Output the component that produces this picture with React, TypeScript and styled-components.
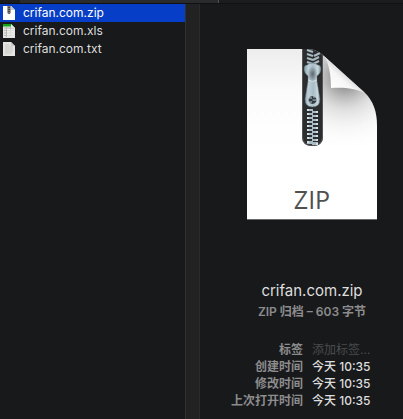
import React, { useState } from "react";
import styled, { createGlobalStyle } from "styled-components";

const GlobalStyle = createGlobalStyle`
  *, *::before, *::after { box-sizing: border-box; }
  body {
    margin: 0;
    background: #18191b;
    color: #dedede;
    font-family: Inter, "Noto Sans CJK SC", sans-serif;
    font-size: 12px;
    -webkit-font-smoothing: antialiased;
  }
`;

const Window = styled.div`
  display: flex;
  flex-direction: column;
  min-height: 100vh;
`;

const TabStrip = styled.div`
  display: grid;
  grid-template-columns: 20px 199px 1fr;
  height: 4px;
  border-bottom: 1px solid #101112;
`;

const TabEdge = styled.div<{ $active?: boolean }>`
  background: ${(p) => (p.$active ? "#2a2b2c" : "#1b1c1d")};
  border-right: ${(p) => (p.$active ? "1px solid #505152" : "0")};
`;

const Columns = styled.main`
  display: grid;
  grid-template-columns: 185px 15px minmax(0, 1fr);
  flex: 1;
`;

const FileList = styled.nav`
  display: flex;
  flex-direction: column;
`;

const FileRow = styled.button<{ $selected: boolean }>`
  display: flex;
  align-items: center;
  gap: 7px;
  height: 18px;
  padding: 0 3px;
  border: 0;
  background: ${(p) => (p.$selected ? "#063ec7" : "transparent")};
  color: ${(p) => (p.$selected ? "#ffffff" : "#dedede")};
  font: inherit;
  line-height: 18px;
  text-align: left;
`;

const Divider = styled.div`
  background: #222222;
  border-left: 1px solid #303132;
  border-right: 1px solid #2a2b2b;
`;

const Preview = styled.section`
  display: flex;
  flex-direction: column;
  align-items: center;
  padding: 42px 0 8px;
`;

const LargeIcon = styled.svg`
  display: block;
  width: 136px;
  height: 176px;
  margin-left: 20px;
`;

const IconLabel = styled.text`
  font-family: "Open Sans", sans-serif;
  font-size: 25px;
  fill: #505050;
`;

const Title = styled.h1`
  margin: 57px 0 0;
  padding-left: 21px;
  font-size: 15px;
  font-weight: 400;
  line-height: 24px;
`;

const Summary = styled.p`
  margin: 0;
  padding-left: 21px;
  color: #8c8c8d;
  font-weight: 600;
  line-height: 17px;
`;

const Details = styled.dl`
  display: grid;
  grid-template-columns: 103px minmax(0, 1fr);
  column-gap: 9px;
  width: 100%;
  margin: 21px 0 0;
  line-height: 17px;
`;

const Term = styled.dt`
  color: #8c8c8d;
  font-weight: 600;
  text-align: right;
`;

const Value = styled.dd`
  margin: 0;
  font-weight: 500;
`;

const TagInput = styled.input`
  display: block;
  width: 100%;
  height: 17px;
  padding: 0;
  border: 0;
  outline: 0;
  background: transparent;
  color: #dedede;
  font: inherit;
  font-weight: 400;
  &::placeholder { color: #4b4c4d; opacity: 1; }
`;

type FileKind = "zip" | "xls" | "txt";

function FileIcon({ kind }: { kind: FileKind }) {
  return (
    <svg width="13" height="16" viewBox="0 0 13 16" aria-hidden="true">
      <path d="M0 1H8L12 5V15H0Z" fill={kind === "zip" ? "#fff" : "#e4e4e2"} />
      {kind === "zip" && (
        <>
          <path d="M4.500 1H7.500V8Q6 10 4.500 8Z" fill="#454545" />
          <path d="M6 1V8" stroke="#a4afb4" strokeDasharray="1 1" />
        </>
      )}
      {kind === "xls" && (
        <>
          <path d="M1 5H11M1 7.500H11M1 10H11M1 12.500H11M3.500 4V14M7.500 4V14" stroke="#a9ada9" strokeWidth=".7" />
          <path d="M0 1H8L9 3.500H0Z" fill="#14a51c" />
          <path d="M4 6H11V14H4Z" fill="#f4f4f2" opacity=".6" />
        </>
      )}
      {kind === "txt" && (
        <path d="M2 4H6M2 6H10M2 8H10M2 10H10M2 12H9" stroke="#bfc0bf" strokeWidth=".7" />
      )}
      <path d="M8 1V5H12Z" fill={kind === "xls" ? "#d8eed8" : "#c9c9c9"} />
    </svg>
  );
}

function ZipDocument() {
  const teeth = Array.from({ length: 9 }, (_, i) => 61 + i * 4);
  return (
    <LargeIcon viewBox="-3 -3 136 176" role="img" aria-label="ZIP">
      <defs>
        <linearGradient id="paper" x1="0" y1="0" x2="0" y2="1">
          <stop offset="0" stopColor="#ededed" />
          <stop offset=".25" stopColor="#fbfbfb" />
          <stop offset=".6" stopColor="#fff" />
        </linearGradient>
        <radialGradient id="shade" gradientUnits="userSpaceOnUse" cx="98" cy="28" r="72">
          <stop offset="0" stopColor="#555" stopOpacity=".85" />
          <stop offset=".22" stopColor="#777" stopOpacity=".6" />
          <stop offset=".45" stopColor="#aaa" stopOpacity=".35" />
          <stop offset=".7" stopColor="#ccc" stopOpacity=".15" />
          <stop offset="1" stopColor="#fff" stopOpacity="0" />
        </radialGradient>
        <linearGradient id="flap" gradientUnits="userSpaceOnUse" x1="84" y1="39" x2="99" y2="22">
          <stop offset="0" stopColor="#fff" />
          <stop offset=".6" stopColor="#f6f6f6" />
          <stop offset="1" stopColor="#d2d2d2" />
        </linearGradient>
        <linearGradient id="metal" x1="0" x2="1">
          <stop offset="0" stopColor="#829aa5" />
          <stop offset=".25" stopColor="#bed0d8" />
          <stop offset=".55" stopColor="#a9bdc6" />
          <stop offset=".8" stopColor="#c7d7dc" />
          <stop offset="1" stopColor="#8197a1" />
        </linearGradient>
        <radialGradient id="neck" cx=".5" cy=".5" r=".5">
          <stop offset="0" stopColor="#485158" stopOpacity=".8" />
          <stop offset="1" stopColor="#485158" stopOpacity="0" />
        </radialGradient>
        <clipPath id="sheet">
          <path d="M0 0H62Q71 1 77 7L118 44C126 52 130 62 130 77V170H0Z" />
        </clipPath>
      </defs>
      <path d="M0 0H62Q71 1 77 7L118 44C126 52 130 62 130 77V170H0Z" fill="url(#paper)" />
      <g clipPath="url(#sheet)">
        <path d="M75 0H130V120H75Z" fill="url(#shade)" />
        <path d="M55 0H76V88Q76 97 65.500 97Q55 97 55 88Z" fill="#2c2d2f" />
        <path d="M55.500 0V88Q56 96 65.500 96.500Q75 96 75.500 88V0" fill="none" stroke="#535456" />
        <g stroke="#a8bbc3" strokeWidth="2" fill="none">
          <path d="M60 1L66 3M60 5L66 7M60 9L66 11M60 13L66 15M67 7L73 4M66 11L72 8M66 15L72 12" />
          {teeth.map((y) => (
            <path key={y} d={`M60 ${y}H66M65 ${y + 2}H71`} />
          ))}
          <path d="M60 94H71" />
        </g>
        <g fill="#d3dfe3">
          {teeth.map((y) => (
            <path key={y} d={`M60 ${y - 1}H62V${y + 1}H60ZM69 ${y + 1}H71V${y + 3}H69Z`} />
          ))}
        </g>
      </g>
      <path d="M57 20Q57 16 60 16Q65 12 71 16Q74 16 74 20Q74 24 70 27V32L73 50Q73 58 65.500 58Q58 58 58 50L61 32V27Q57 24 57 20Z" fill="url(#metal)" stroke="#54646c" strokeWidth=".5" />
      <ellipse cx="65.500" cy="25" rx="5" ry="8" fill="url(#neck)" />
      <path d="M61 31Q65 34 70 31" fill="none" stroke="#dce6e9" strokeWidth=".8" />
      <circle cx="65.500" cy="51" r="4.300" fill="#30393e" stroke="#d0dfe4" strokeWidth=".7" />
      <path d="M62 49H65M65.500 51H69M62 53H65M66 48H68" stroke="#b4c8d0" strokeWidth="1.200" />
      <path d="M77 7C82 14 84 26 84 39C96 38 108 39 118 44Z" fill="url(#flap)" />
      <path d="M0 170.500H130" fill="none" stroke="#676867" strokeWidth="1" />
      <IconLabel x="65" y="160" textAnchor="middle">ZIP</IconLabel>
    </LargeIcon>
  );
}

const files: { name: string; kind: FileKind }[] = [
  { name: "crifan.com.zip", kind: "zip" },
  { name: "crifan.com.xls", kind: "xls" },
  { name: "crifan.com.txt", kind: "txt" },
];

const dates = ["创建时间", "修改时间", "上次打开时间"];

export default function App() {
  const [selected, setSelected] = useState("crifan.com.zip");
  return (
    <Window>
      <GlobalStyle />
      <TabStrip>
        <TabEdge />
        <TabEdge $active />
        <TabEdge />
      </TabStrip>
      <Columns>
        <FileList>
          {files.map((file) => (
            <FileRow
              key={file.name}
              type="button"
              $selected={file.name === selected}
              aria-pressed={file.name === selected}
              onClick={() => setSelected(file.name)}
            >
              <FileIcon kind={file.kind} />
              {file.name}
            </FileRow>
          ))}
        </FileList>
        <Divider />
        <Preview>
          <ZipDocument />
          <Title>crifan.com.zip</Title>
          <Summary>ZIP 归档 – 603 字节</Summary>
          <Details>
            <Term><label htmlFor="tags">标签</label></Term>
            <Value><TagInput id="tags" placeholder="添加标签…" /></Value>
            {dates.map((label) => (
              <React.Fragment key={label}>
                <Term>{label}</Term>
                <Value>今天 10:35</Value>
              </React.Fragment>
            ))}
          </Details>
        </Preview>
      </Columns>
    </Window>
  );
}
